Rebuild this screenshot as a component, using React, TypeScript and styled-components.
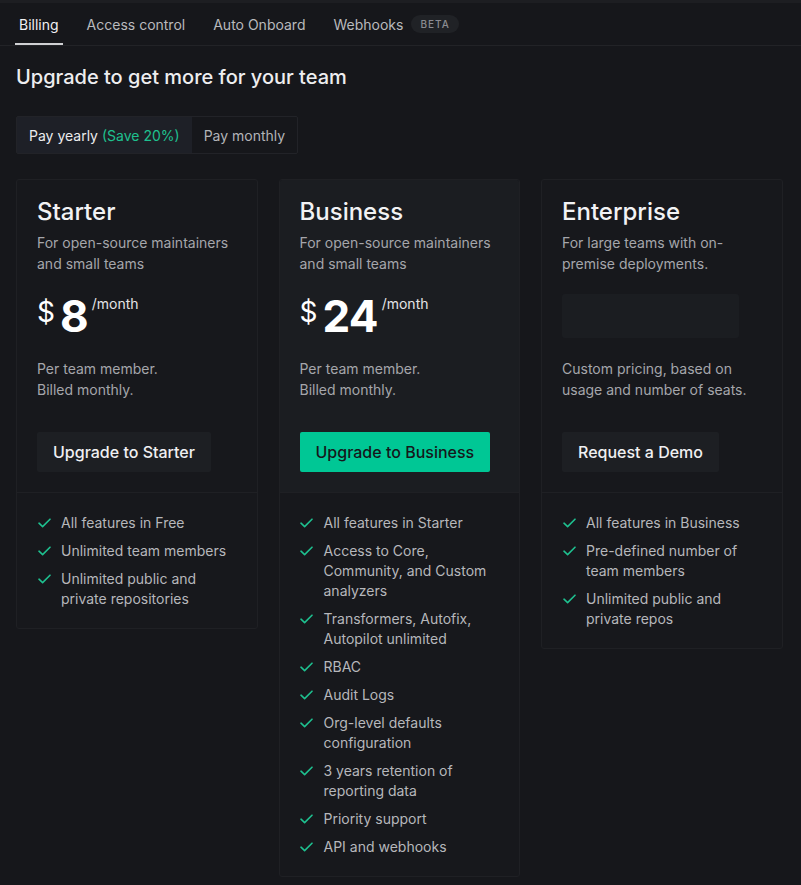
import React from "react";
import styled, { createGlobalStyle } from "styled-components";

const Global = createGlobalStyle`
  html, body { margin: 0; padding: 0; background: #16171b; }
  body { font-family: Inter, "Noto Sans", sans-serif; color: #e6e6e8; -webkit-font-smoothing: antialiased; }
  * { box-sizing: border-box; }
`;

const Page = styled.div`
  min-height: 885px;
  background: #16171b;
`;

const TabBar = styled.nav`
  display: flex;
  gap: 20px;
  padding: 0 15px;
  border-top: 3px solid #1d1e22;
  border-bottom: 1px solid #222327;
`;

const Tab = styled.div<{ $active?: boolean }>`
  display: flex;
  align-items: center;
  height: 42px;
  padding: 2px 4px 0;
  font-size: 14px;
  color: ${(p) => (p.$active ? "#f0f0f2" : "#b9babd")};
  border-bottom: 2px solid ${(p) => (p.$active ? "#cfd0d3" : "transparent")};
`;

const Badge = styled.span`
  margin-left: 8px;
  height: 18px;
  padding: 0 9px;
  border-radius: 9px;
  background: #202226;
  color: #8b8c91;
  font-size: 10px;
  font-weight: 500;
  letter-spacing: 1px;
  display: inline-flex;
  align-items: center;
`;

const Main = styled.main`
  padding: 17px 16px 0;
`;

const Title = styled.h1`
  margin: 0;
  font-size: 20px;
  line-height: 28px;
  font-weight: 500;
  color: #eeeef0;
`;

const Toggle = styled.div`
  display: inline-flex;
  margin-top: 25px;
  border: 1px solid #222328;
  border-radius: 2px;
  height: 38px;
`;

const ToggleOption = styled.div<{ $active?: boolean }>`
  display: flex;
  align-items: center;
  padding: 0 12px;
  font-size: 14px;
  background: ${(p) => (p.$active ? "#1e2027" : "transparent")};
  color: ${(p) => (p.$active ? "#ececee" : "#b3b4b8")};
`;

const Save = styled.span`
  color: #1ec08f;
  margin-left: 4px;
`;

const Grid = styled.div`
  margin-top: 25px;
  display: grid;
  grid-template-columns: repeat(3, 241.5px);
  gap: 21px;
  align-items: start;
`;

const Card = styled.section`
  border: 1px solid #1f2024;
  border-radius: 3px;
  background: #17181c;
  overflow: hidden;
`;

const Top = styled.div<{ $highlight?: boolean }>`
  padding: 16px 20px 20px;
  background: ${(p) => (p.$highlight ? "#1b1d21" : "transparent")};
`;

const PlanName = styled.h2`
  margin: 0;
  font-size: 24px;
  line-height: 32px;
  font-weight: 500;
  color: #f2f2f4;
`;

const Desc = styled.p`
  margin: 4px 0 0;
  font-size: 14px;
  line-height: 21px;
  color: #a5a6ab;
`;

const PriceRow = styled.div`
  margin-top: 20px;
  height: 44px;
  display: flex;
  align-items: flex-start;
  color: #ffffff;
`;

const Currency = styled.span`
  font-size: 28px;
  line-height: 28px;
  margin-top: 4px;
  margin-right: 5px;
`;

const Amount = styled.span`
  font-size: 44px;
  line-height: 44px;
  font-weight: 700;
  letter-spacing: -0.8px;
`;

const Per = styled.span`
  font-size: 14px;
  line-height: 20px;
  margin-left: 4px;
  color: #e4e4e6;
`;

const Placeholder = styled.div`
  margin-top: 20px;
  height: 44px;
  width: 177px;
  border-radius: 3px;
  background: #1b1d21;
`;

const Note = styled.p`
  margin: 20px 0 0;
  font-size: 14px;
  line-height: 21px;
  color: #a5a6ab;
`;

const Button = styled.button<{ $primary?: boolean }>`
  margin-top: 32px;
  height: 40px;
  padding: 0 16px;
  border: none;
  border-radius: 2px;
  font-family: inherit;
  font-size: 16px;
  font-weight: 500;
  background: ${(p) => (p.$primary ? "#00c795" : "#1d1f23")};
  color: ${(p) => (p.$primary ? "#15171b" : "#f0f0f2")};
  cursor: pointer;
`;

const Features = styled.ul`
  list-style: none;
  margin: 0;
  padding: 20px 20px 19px;
  border-top: 1px solid #1f2024;
  display: flex;
  flex-direction: column;
  gap: 8px;
`;

const Feature = styled.li`
  display: flex;
  gap: 10px;
  font-size: 14px;
  line-height: 20px;
  color: #b6b7bb;
`;

const CheckBox = styled.span`
  flex: none;
  width: 14px;
  height: 20px;
  display: flex;
  align-items: center;
  justify-content: center;
`;

const Check = () => (
  <CheckBox>
    <svg width="13" height="10" viewBox="0 0 13 10" fill="none">
      <path d="M1 5.2 L4.6 8.6 L12 1.2" stroke="#1ec08f" strokeWidth="1.6" strokeLinecap="round" strokeLinejoin="round" />
    </svg>
  </CheckBox>
);

type Plan = {
  name: string;
  desc: string;
  price?: string;
  note: string;
  cta: string;
  primary?: boolean;
  features: string[];
};

const plans: Plan[] = [
  {
    name: "Starter",
    desc: "For open-source maintainers and small teams",
    price: "8",
    note: "Per team member.\nBilled monthly.",
    cta: "Upgrade to Starter",
    features: ["All features in Free", "Unlimited team members", "Unlimited public and private repositories"],
  },
  {
    name: "Business",
    desc: "For open-source maintainers and small teams",
    price: "24",
    note: "Per team member.\nBilled monthly.",
    cta: "Upgrade to Business",
    primary: true,
    features: [
      "All features in Starter",
      "Access to Core, Community, and Custom analyzers",
      "Transformers, Autofix, Autopilot unlimited",
      "RBAC",
      "Audit Logs",
      "Org-level defaults configuration",
      "3 years retention of reporting data",
      "Priority support",
      "API and webhooks",
    ],
  },
  {
    name: "Enterprise",
    desc: "For large teams with on-premise deployments.",
    note: "Custom pricing, based on usage and number of seats.",
    cta: "Request a Demo",
    features: ["All features in Business", "Pre-defined number of team members", "Unlimited public and private repos"],
  },
];

export default function App() {
  return (
    <Page>
      <Global />
      <TabBar>
        <Tab $active>Billing</Tab>
        <Tab>Access control</Tab>
        <Tab>Auto Onboard</Tab>
        <Tab>
          Webhooks<Badge>BETA</Badge>
        </Tab>
      </TabBar>
      <Main>
        <Title>Upgrade to get more for your team</Title>
        <Toggle>
          <ToggleOption $active>
            Pay yearly<Save>(Save 20%)</Save>
          </ToggleOption>
          <ToggleOption>Pay monthly</ToggleOption>
        </Toggle>
        <Grid>
          {plans.map((p) => (
            <Card key={p.name}>
              <Top $highlight={p.primary}>
                <PlanName>{p.name}</PlanName>
                <Desc>{p.desc}</Desc>
                {p.price ? (
                  <PriceRow>
                    <Currency>$</Currency>
                    <Amount>{p.price}</Amount>
                    <Per>/month</Per>
                  </PriceRow>
                ) : (
                  <Placeholder />
                )}
                <Note>
                  {p.note.split("\n").map((l, i) => (
                    <React.Fragment key={i}>
                      {i > 0 && <br />}
                      {l}
                    </React.Fragment>
                  ))}
                </Note>
                <Button $primary={p.primary}>{p.cta}</Button>
              </Top>
              <Features>
                {p.features.map((f) => (
                  <Feature key={f}>
                    <Check />
                    <span>{f}</span>
                  </Feature>
                ))}
              </Features>
            </Card>
          ))}
        </Grid>
      </Main>
    </Page>
  );
}
